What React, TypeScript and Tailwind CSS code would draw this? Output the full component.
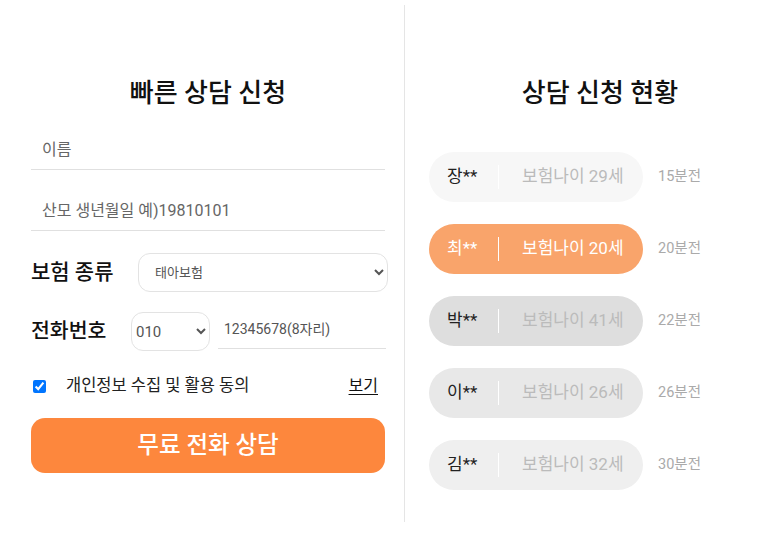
import React from 'react';

interface Request {
  name: string;
  age: number;
  ago: number;
  pill: string;
  active?: boolean;
}

const requests: Request[] = [
  { name: '장**', age: 29, ago: 15, pill: 'bg-[#f7f7f7]' },
  { name: '최**', age: 20, ago: 20, pill: 'bg-[#f9a46b]', active: true },
  { name: '박**', age: 41, ago: 22, pill: 'bg-[#dedede]' },
  { name: '이**', age: 26, ago: 26, pill: 'bg-[#e8e8e8]' },
  { name: '김**', age: 32, ago: 30, pill: 'bg-[#efefef]' },
];

const App: React.FC = () => {
  return (
    <div className="flex w-[781px] h-[540px] bg-white text-[#111] font-['Roboto','Noto_Sans_CJK_KR',sans-serif]">
      {/* quick consult form */}
      <section className="w-[404px] pl-[31px] pt-[75px]">
        <h2 className="w-[354px] text-center text-[26px] leading-[36px] font-medium">빠른 상담 신청</h2>

        <input
          className="mt-[19px] block w-[354px] h-[40px] pl-[11px] border-b border-[#e0e0e0] text-[16px] outline-none placeholder:text-[#666]"
          placeholder="이름"
        />
        <input
          className="mt-[21px] block w-[354px] h-[40px] pl-[11px] border-b border-[#e0e0e0] text-[16px] outline-none placeholder:text-[#666]"
          placeholder="산모 생년월일 예)19810101"
        />

        <div className="mt-[22px] flex items-center">
          <label className="w-[107px] text-[21px] font-medium">보험 종류</label>
          <select className="w-[250px] h-[39px] pl-[12px] pr-[6px] rounded-[12px] border border-[#e3e3e3] bg-white text-[13px] text-[#555]">
            <option>태아보험</option>
            <option>어린이보험</option>
          </select>
        </div>

        <div className="mt-[20px] flex items-center">
          <label className="w-[100px] text-[20.5px] font-medium">전화번호</label>
          <select className="w-[79px] h-[39px] pl-0 pr-[6px] rounded-[12px] border border-[#e3e3e3] bg-white text-[15px] text-[#555]">
            <option>010</option>
            <option>011</option>
            <option>016</option>
          </select>
          <input
            className="ml-[8px] w-[168px] h-[38px] mt-[-4px] pl-[6px] border-b border-[#e0e0e0] text-[14px] outline-none placeholder:text-[#555]"
            placeholder="12345678(8자리)"
          />
        </div>

        <div className="mt-[25px] w-[354px] h-[20px] flex items-center">
          <input type="checkbox" defaultChecked className="ml-[2px] w-[13px] h-[13px]" />
          <span className="ml-[20px] text-[16.5px] text-[#222]">개인정보 수집 및 활용 동의</span>
          <a className="ml-auto mr-[7px] text-[16px] underline underline-offset-[3px]">보기</a>
        </div>

        <button className="mt-[22px] w-[354px] h-[55px] rounded-[14px] bg-[#fd873d] text-white text-[23.5px] font-medium">
          무료 전화 상담
        </button>
      </section>

      <div className="mt-[5px] w-px h-[517px] bg-[#e5e5e5]" />

      {/* live request list */}
      <section className="pl-[24px] pt-[75px]">
        <h2 className="w-[342px] text-center text-[26px] leading-[36px] font-medium">상담 신청 현황</h2>
        <ul className="mt-[41px] flex flex-col gap-[22px]">
          {requests.map(r => (
            <li key={r.name} className="flex items-center">
              <div className={`w-[214px] h-[50px] rounded-full flex items-center pl-[18px] ${r.pill}`}>
                <span className={`w-[51px] text-[17px] ${r.active ? 'text-white' : 'text-[#222]'}`}>{r.name}</span>
                <span className="w-px h-[24px] bg-white" />
                <span className={`ml-[23px] text-[17px] ${r.active ? 'text-white' : 'text-[#bbb]'}`}>
                  보험나이 {r.age}세
                </span>
              </div>
              <span className="ml-[15px] text-[14.5px] text-[#aaa]">{r.ago}분전</span>
            </li>
          ))}
        </ul>
      </section>
    </div>
  );
};

export default App;
